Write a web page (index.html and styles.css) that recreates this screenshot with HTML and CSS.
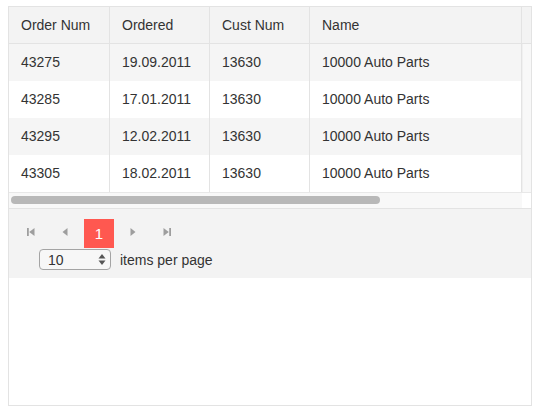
FILE: index.html
```html
<!DOCTYPE html>
<html lang="en">
<head>
    <meta charset="UTF-8">
    <title>Orders grid</title>
    <link rel="stylesheet" href="styles.css">
</head>
<body>

    <!-- グリッド -->
    <div class="grid">
        <div class="grid-header">
            <div class="row">
                <div class="cell">Order Num</div>
                <div class="cell">Ordered</div>
                <div class="cell">Cust Num</div>
                <div class="cell name">Name</div>
            </div>
            <div class="gutter"></div>
        </div>

        <div class="grid-body">
            <div class="rows">
                <div class="row alt">
                    <div class="cell">43275</div>
                    <div class="cell">19.09.2011</div>
                    <div class="cell">13630</div>
                    <div class="cell name">10000 Auto Parts</div>
                </div>
                <div class="row">
                    <div class="cell">43285</div>
                    <div class="cell">17.01.2011</div>
                    <div class="cell">13630</div>
                    <div class="cell name">10000 Auto Parts</div>
                </div>
                <div class="row alt">
                    <div class="cell">43295</div>
                    <div class="cell">12.02.2011</div>
                    <div class="cell">13630</div>
                    <div class="cell name">10000 Auto Parts</div>
                </div>
                <div class="row">
                    <div class="cell">43305</div>
                    <div class="cell">18.02.2011</div>
                    <div class="cell">13630</div>
                    <div class="cell name">10000 Auto Parts</div>
                </div>
            </div>
            <div class="vscroll"></div>
        </div>

        <!-- 横スクロールバー -->
        <div class="hscroll-wrap">
            <div class="hscroll"><div class="thumb"></div></div>
            <div class="corner"></div>
        </div>

        <!-- ページャー -->
        <div class="pager">
            <div class="pager-nav">
                <span class="page-btn">
                    <svg width="10" height="10" viewBox="0 0 10 10"><rect x="1" y="1" width="1.8" height="8" fill="#9e9e9e"/><polygon points="8.5,1 8.5,9 3.2,5" fill="#9e9e9e"/></svg>
                </span>
                <span class="page-btn">
                    <svg width="10" height="10" viewBox="0 0 10 10"><polygon points="7.5,1 7.5,9 2.5,5" fill="#9e9e9e"/></svg>
                </span>
                <span class="page-btn current">1</span>
                <span class="page-btn">
                    <svg width="10" height="10" viewBox="0 0 10 10"><polygon points="2.5,1 2.5,9 7.5,5" fill="#9e9e9e"/></svg>
                </span>
                <span class="page-btn">
                    <svg width="10" height="10" viewBox="0 0 10 10"><polygon points="1.5,1 1.5,9 6.8,5" fill="#9e9e9e"/><rect x="7.2" y="1" width="1.8" height="8" fill="#9e9e9e"/></svg>
                </span>
            </div>
            <div class="page-size">
                <span class="select">
                    <span class="select-value">10</span>
                    <svg class="spinner" width="8" height="13" viewBox="0 0 8 13"><polygon points="4,1 7.5,5.5 0.5,5.5" fill="#555"/><polygon points="0.5,7.5 7.5,7.5 4,12" fill="#555"/></svg>
                </span>
                <span class="page-size-label">items per page</span>
            </div>
        </div>
    </div>

</body>
</html>
```

FILE: styles.css
```css
body {
    margin: 6px 8px;
    font-family: 'Liberation Sans', Arial, sans-serif;
    font-size: 14px;
    color: #333;
    background: #fff;
}

.grid {
    width: 524px;
    height: 400px;
    box-sizing: border-box;
    border: 1px solid #e3e3e3;
    background: #fff;
}

/* ヘッダー */
.grid-header {
    display: flex;
    background: #f3f3f3;
    border-bottom: 1px solid #e3e3e3;
}

.row {
    display: flex;
    width: 513px;
}

.cell {
    box-sizing: border-box;
    width: 100px;
    height: 37px;
    line-height: 37px;
    padding-left: 12px;
    border-right: 1px solid #e3e3e3;
    white-space: nowrap;
}

.cell:first-child {
    width: 101px;
}

.cell.name {
    width: 212px;
}

.grid-header .cell {
    height: 36px;
    line-height: 36px;
}

.gutter {
    flex: 1;
}

/* 本体 */
.grid-body {
    display: flex;
}

.row.alt {
    background: #f5f5f5;
}

.vscroll {
    flex: 1;
    background: #f8f8f8;
    border-left: 1px solid #f0f0f0;
}

/* 横スクロール */
.hscroll-wrap {
    display: flex;
    height: 15px;
    border-top: 1px solid #e8e8e8;
    border-bottom: 1px solid #e3e3e3;
}

.hscroll {
    width: 513px;
    background: #f8f8f8;
    padding: 3px 0 0 2px;
    box-sizing: border-box;
}

.thumb {
    width: 369px;
    height: 8px;
    border-radius: 4px;
    background: #b8b8b8;
}

.corner {
    flex: 1;
    background: #fff;
}

/* ページャー */
.pager {
    background: #f3f3f3;
    padding: 10px 0 8px 7px;
}

.pager-nav {
    display: flex;
    gap: 4px;
}

.page-btn {
    display: flex;
    align-items: center;
    justify-content: center;
    width: 30px;
    height: 29px;
}

.page-btn svg {
    margin-top: -3px;
}

.page-btn.current {
    background: #ff5850;
    color: #fff;
    font-size: 15px;
}

.page-size {
    display: flex;
    align-items: center;
    margin: 1px 0 0 23px;
}

.select {
    box-sizing: border-box;
    display: flex;
    align-items: center;
    justify-content: space-between;
    width: 72px;
    height: 21px;
    padding: 0 4px 0 8px;
    border: 1px solid #a4a4a4;
    border-radius: 4px;
    background: #f7f7f7;
}

.page-size-label {
    margin-left: 9px;
}
```
